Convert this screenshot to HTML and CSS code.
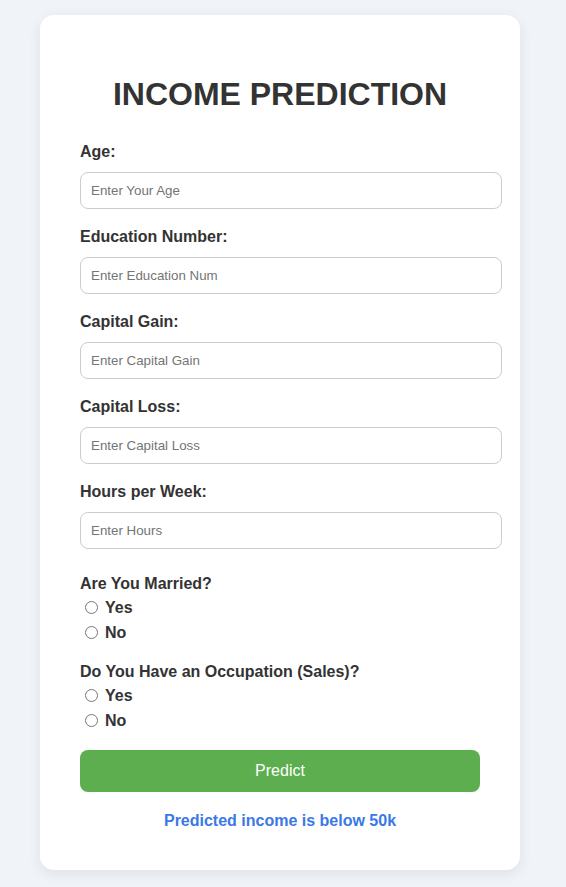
FILE: index.html
```html
<!DOCTYPE html>
<html lang="en">
<head>
<meta charset="utf-8">
<title>Income Prediction</title>
<link rel="stylesheet" href="styles.css">
</head>
<body>
<main class="card">
  <h1 class="title">INCOME PREDICTION</h1>
  <form class="form">
    <div class="field">
      <label class="label" for="age">Age:</label>
      <input class="input" id="age" type="text" placeholder="Enter Your Age">
    </div>
    <div class="field">
      <label class="label" for="edu">Education Number:</label>
      <input class="input" id="edu" type="text" placeholder="Enter Education Num">
    </div>
    <div class="field">
      <label class="label" for="gain">Capital Gain:</label>
      <input class="input" id="gain" type="text" placeholder="Enter Capital Gain">
    </div>
    <div class="field">
      <label class="label" for="loss">Capital Loss:</label>
      <input class="input" id="loss" type="text" placeholder="Enter Capital Loss">
    </div>
    <div class="field">
      <label class="label" for="hours">Hours per Week:</label>
      <input class="input" id="hours" type="text" placeholder="Enter Hours">
    </div>
    <div class="group">
      <div class="label">Are You Married?</div>
      <label class="radio-row"><input class="radio" type="radio" name="married"><span>Yes</span></label>
      <label class="radio-row"><input class="radio" type="radio" name="married"><span>No</span></label>
    </div>
    <div class="group">
      <div class="label">Do You Have an Occupation (Sales)?</div>
      <label class="radio-row"><input class="radio" type="radio" name="sales"><span>Yes</span></label>
      <label class="radio-row"><input class="radio" type="radio" name="sales"><span>No</span></label>
    </div>
    <button class="button" type="button">Predict</button>
  </form>
  <p class="result">Predicted income is below 50k</p>
</main>
</body>
</html>
```
FILE: styles.css
```css
* { box-sizing: border-box; }
html, body { margin: 0; }
body {
  background: #f0f3f8;
  font-family: "Liberation Sans", Arial, sans-serif;
  color: #333;
  padding: 15px 40px 18px;
}
.card {
  width: 480px;
  background: #fff;
  border-radius: 14px;
  box-shadow: 0 4px 14px rgba(0, 0, 0, 0.08);
  padding: 61px 40px 40px;
}
.title {
  margin: 0 0 30px;
  font-size: 32px;
  line-height: 37px;
  font-weight: bold;
  text-align: center;
  color: #333;
}
.form { display: flex; flex-direction: column; }
.field { display: flex; flex-direction: column; margin-bottom: 19px; }
.label {
  display: block;
  font-size: 16px;
  line-height: 18px;
  font-weight: bold;
  color: #333;
}
.field .label { margin-bottom: 11px; }
.input {
  width: 422px;
  height: 37px;
  padding: 10px;
  border: 1px solid #ccc;
  border-radius: 8px;
  font-family: "Liberation Sans", Arial, sans-serif;
  font-size: 13.333px;
  color: #333;
  background: #fff;
}
.input::placeholder { color: #757575; }
.group { display: flex; flex-direction: column; margin-top: 7px; }
.group + .group { margin-top: 18px; }
.group .label { margin-bottom: 2px; }
.radio-row {
  display: flex;
  align-items: center;
  gap: 7px;
  height: 25px;
  font-size: 16px;
  font-weight: bold;
  color: #333;
}
.radio { width: 13px; height: 13px; margin: 0 0 0 5px; }
.button {
  margin-top: 17px;
  width: 400px;
  height: 42px;
  border: none;
  border-radius: 8px;
  background: #5cae4f;
  color: #fff;
  font-family: "Liberation Sans", Arial, sans-serif;
  font-size: 16px;
}
.result {
  margin: 20px 0 0;
  font-size: 16px;
  line-height: 18px;
  font-weight: bold;
  color: #3b78e7;
  text-align: center;
}
```
